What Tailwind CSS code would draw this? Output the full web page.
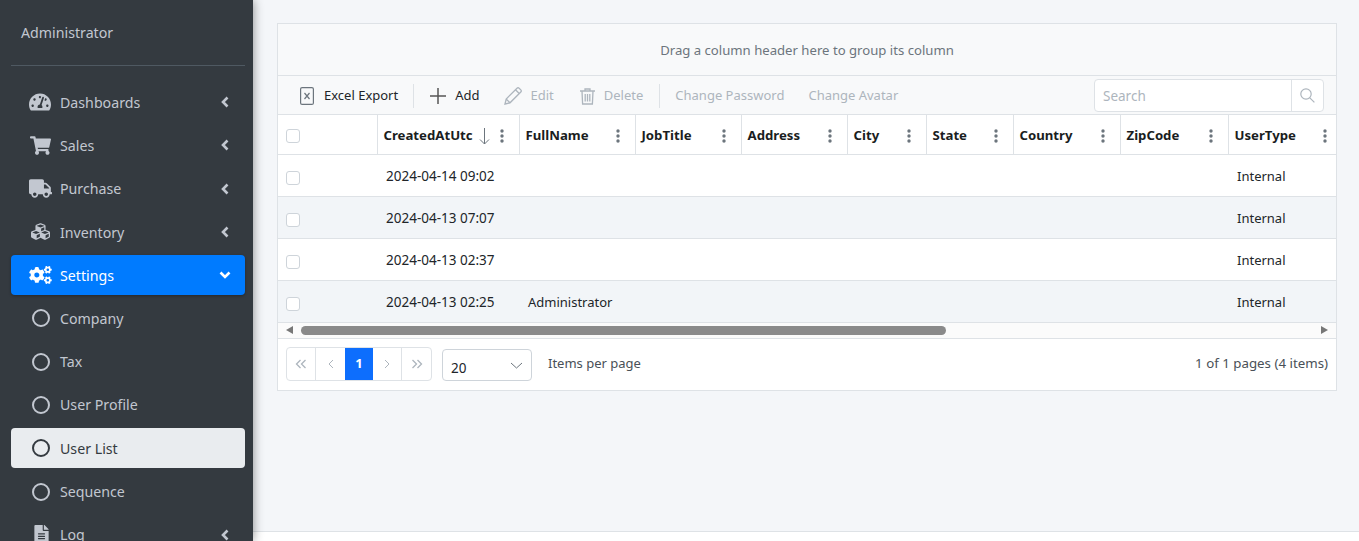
<!DOCTYPE html>
<html lang="en">
<head>
<meta charset="UTF-8">
<title>User List</title>
<script src="https://cdn.jsdelivr.net/npm/@tailwindcss/browser@4"></script>
</head>
<body class="h-[541px] overflow-hidden flex bg-[#f4f6f9] font-['Noto_Sans',sans-serif] text-[13px] text-[#212529]">

<!-- sidebar -->
<aside class="w-[253px] h-[541px] shrink-0 overflow-hidden bg-[#343a40] pl-[11px] pr-[8px] text-[14.2px] text-[#c2c7d0] shadow-[0_0_10px_rgba(0,0,0,0.45)] relative z-10">
  <div class="h-[66px] border-b border-[#4f5962] pl-[10px] pt-[22px] leading-[22px]">Administrator</div>
  <nav class="pt-[16px]">
    <a class="flex items-center h-[40px] mb-[3.3px] pl-[18px] pr-[16px]">
      <svg class="w-[22px] h-[20px] fill-[#c2c7d0]" viewBox="0 0 576 512"><path d="M288 32C128.94 32 0 160.94 0 320c0 52.8 14.25 102.26 39.06 144.8 5.61 9.62 16.3 15.2 27.44 15.2h443c11.14 0 21.83-5.58 27.44-15.2C561.75 422.26 576 372.8 576 320c0-159.06-128.94-288-288-288zm0 64c14.71 0 26.58 10.13 30.32 23.65-1.11 2.26-2.64 4.23-3.45 6.67l-9.22 27.67c-5.13 3.49-10.97 6.01-17.64 6.01-17.67 0-32-14.33-32-32S270.33 96 288 96zM96 384c-17.67 0-32-14.33-32-32s14.33-32 32-32 32 14.33 32 32-14.33 32-32 32zm48-160c-17.67 0-32-14.33-32-32s14.33-32 32-32 32 14.33 32 32-14.33 32-32 32zm246.77-72.41l-61.33 184C343.13 347.33 352 364.54 352 384c0 11.72-3.38 22.55-8.88 32H232.88c-5.5-9.45-8.88-20.28-8.88-32 0-33.94 26.5-61.43 59.9-63.59l61.34-184.01c4.17-12.56 17.73-19.45 30.36-15.17 12.57 4.19 19.35 17.77 15.17 30.36zm14.66 57.2l15.52-46.55c3.47-1.29 7.13-2.23 11.05-2.23 17.67 0 32 14.33 32 32s-14.33 32-32 32c-11.38-.01-20.89-6.28-26.57-15.22zM480 384c-17.67 0-32-14.33-32-32s14.33-32 32-32 32 14.33 32 32-14.33 32-32 32z"/></svg>
      <span class="ml-[9px] pt-[2px] flex-1">Dashboards</span>
      <svg class="w-[8px] h-[12px] stroke-[#c2c7d0] fill-none" stroke-width="2.6" viewBox="0 0 8 12"><path d="M6.5 1.5 2 6l4.5 4.5"/></svg>
    </a>
    <a class="flex items-center h-[40px] mb-[3.3px] pl-[19px] pr-[16px]">
      <svg class="w-[21px] h-[19px] fill-[#c2c7d0]" viewBox="0 0 576 512"><path d="M528.12 301.319l47.273-208C578.806 78.301 567.391 64 551.99 64H159.208l-9.166-44.81C147.758 8.021 137.93 0 126.529 0H24C10.745 0 0 10.745 0 24v16c0 13.255 10.745 24 24 24h69.883l70.248 343.435C147.325 417.1 136 435.222 136 456c0 30.928 25.072 56 56 56s56-25.072 56-56c0-15.674-6.447-29.835-16.824-40h209.647C430.447 426.165 424 440.326 424 456c0 30.928 25.072 56 56 56s56-25.072 56-56c0-22.172-12.888-41.332-31.579-50.405l5.517-24.276c3.413-15.018-8.002-29.319-23.403-29.319H218.117l-6.545-32h293.145c11.206 0 20.92-7.754 23.403-18.681z"/></svg>
      <span class="ml-[9px] flex-1">Sales</span>
      <svg class="w-[8px] h-[12px] stroke-[#c2c7d0] fill-none" stroke-width="2.6" viewBox="0 0 8 12"><path d="M6.5 1.5 2 6l4.5 4.5"/></svg>
    </a>
    <a class="flex items-center h-[40px] mb-[3.3px] pl-[18px] pr-[16px]">
      <svg class="w-[23px] h-[19px] fill-[#c2c7d0]" viewBox="0 0 640 512"><path d="M624 352h-16V243.9c0-12.7-5.1-24.9-14.1-33.9L494 110.1c-9-9-21.2-14.1-33.9-14.1H416V48c0-26.5-21.5-48-48-48H48C21.5 0 0 21.5 0 48v320c0 26.5 21.5 48 48 48h16c0 53 43 96 96 96s96-43 96-96h128c0 53 43 96 96 96s96-43 96-96h48c8.8 0 16-7.2 16-16v-32c0-8.8-7.2-16-16-16zM160 464c-26.5 0-48-21.5-48-48s21.5-48 48-48 48 21.5 48 48-21.5 48-48 48zm320 0c-26.5 0-48-21.5-48-48s21.5-48 48-48 48 21.5 48 48-21.5 48-48 48zm80-208H416V144h44.1l99.9 99.9V256z"/></svg>
      <span class="ml-[8px] flex-1">Purchase</span>
      <svg class="w-[8px] h-[12px] stroke-[#c2c7d0] fill-none" stroke-width="2.6" viewBox="0 0 8 12"><path d="M6.5 1.5 2 6l4.5 4.5"/></svg>
    </a>
    <a class="flex items-center h-[40px] mb-[3.3px] pl-[20px] pr-[16px]">
      <svg class="w-[19px] h-[19px] fill-[#c2c7d0]" viewBox="0 0 512 512"><path d="M488.6 250.2L392 214V105.5c0-15-9.3-28.4-23.4-33.7l-100-37.5c-8.1-3.1-17.1-3.1-25.3 0l-100 37.5c-14.1 5.3-23.4 18.7-23.4 33.7V214l-96.6 36.2C9.3 255.5 0 268.9 0 283.9V394c0 13.6 7.7 26.1 19.9 32.2l100 50c10.1 5.1 22.1 5.1 32.2 0l103.9-52 103.9 52c10.1 5.1 22.1 5.1 32.2 0l100-50c12.2-6.1 19.9-18.6 19.9-32.2V283.9c0-15-9.3-28.4-23.4-33.7zM358 214.8l-85 31.9v-68.2l85-37v73.3zM154 104.1l102-38.2 102 38.2v.6l-102 41.4-102-41.4v-.6zm84 291.1l-85 42.5v-79.1l85-38.8v75.4zm0-112l-102 41.4-102-41.4v-.6l102-38.2 102 38.2v.6zm240 112l-85 42.5v-79.1l85-38.8v75.4zm0-112l-102 41.4-102-41.4v-.6l102-38.2 102 38.2v.6z"/></svg>
      <span class="ml-[10px] pt-[2px] flex-1">Inventory</span>
      <svg class="w-[8px] h-[12px] stroke-[#c2c7d0] fill-none" stroke-width="2.6" viewBox="0 0 8 12"><path d="M6.5 1.5 2 6l4.5 4.5"/></svg>
    </a>
    <a class="flex items-center h-[40px] mb-[3.3px] pl-[18px] pr-[14px] rounded-[4px] bg-[#007bff] text-white shadow-[0_1px_3px_rgba(0,0,0,0.3)]">
      <svg class="w-[23px] h-[18px] fill-white" viewBox="0 0 640 512"><path d="M512.1 191l-8.2 14.3c-3 5.3-9.4 7.5-15.1 5.4-11.8-4.4-22.6-10.7-32.1-18.6-4.6-3.8-5.8-10.5-2.8-15.7l8.2-14.3c-6.9-8-12.3-17.3-15.9-27.4h-16.5c-6 0-11.2-4.3-12.2-10.3-2-12-2.1-24.6 0-37.1 1-6 6.2-10.4 12.2-10.4h16.5c3.6-10.1 9-19.4 15.9-27.4l-8.2-14.3c-3-5.2-1.9-11.9 2.8-15.7 9.5-7.9 20.4-14.2 32.1-18.6 5.7-2.1 12.1.1 15.1 5.4l8.2 14.3c10.5-1.9 21.2-1.9 31.7 0L552 6.3c3-5.3 9.4-7.5 15.1-5.4 11.8 4.4 22.6 10.7 32.1 18.6 4.6 3.8 5.8 10.5 2.8 15.7l-8.2 14.3c6.9 8 12.3 17.3 15.9 27.4h16.5c6 0 11.2 4.3 12.2 10.3 2 12 2.1 24.6 0 37.1-1 6-6.2 10.4-12.2 10.4h-16.5c-3.6 10.1-9 19.4-15.9 27.4l8.2 14.3c3 5.2 1.9 11.9-2.8 15.7-9.5 7.9-20.4 14.2-32.1 18.6-5.7 2.1-12.1-.1-15.1-5.4l-8.2-14.3c-10.4 1.9-21.2 1.9-31.7 0zm-10.5-58.8c38.5 29.6 82.4-14.3 52.8-52.8-38.5-29.7-82.4 14.3-52.8 52.8zM386.3 286.1l33.7 16.8c10.1 5.8 14.5 18.1 10.5 29.1-8.9 24.2-26.4 46.4-42.6 65.8-7.4 8.9-20.2 11.1-30.3 5.3l-29.1-16.8c-16 13.7-34.6 24.6-54.9 31.7v33.6c0 11.6-8.3 21.6-19.7 23.6-24.6 4.2-50.4 4.4-75.9 0-11.5-2-20-11.9-20-23.6V418c-20.3-7.2-38.9-18-54.9-31.7L74 403c-10 5.8-22.9 3.6-30.3-5.3-16.2-19.4-33.3-41.6-42.2-65.7-4-10.9.4-23.2 10.5-29.1l33.3-16.8c-3.9-20.9-3.9-42.4 0-63.4L12 205.8c-10.1-5.8-14.6-18.1-10.5-29 8.9-24.2 26-46.4 42.2-65.8 7.4-8.9 20.2-11.1 30.3-5.3l29.1 16.8c16-13.7 34.6-24.6 54.9-31.7V57.1c0-11.5 8.2-21.5 19.6-23.5 24.6-4.2 50.5-4.4 76-.1 11.5 2 20 11.9 20 23.6v33.6c20.3 7.2 38.9 18 54.9 31.7l29.1-16.8c10-5.8 22.9-3.6 30.3 5.3 16.2 19.4 33.2 41.6 42.1 65.8 4 10.9.1 23.2-10 29.1l-33.7 16.8c3.9 21 3.9 42.5 0 63.5zm-117.6 21.1c59.2-77-28.7-164.9-105.7-105.7-59.2 77 28.7 164.9 105.7 105.7zm243.4 182.7l-8.2 14.3c-3 5.3-9.4 7.5-15.1 5.4-11.8-4.4-22.6-10.7-32.1-18.6-4.6-3.8-5.8-10.5-2.8-15.7l8.2-14.3c-6.9-8-12.3-17.3-15.9-27.4h-16.5c-6 0-11.2-4.3-12.2-10.3-2-12-2.1-24.6 0-37.1 1-6 6.2-10.4 12.2-10.4h16.5c3.6-10.1 9-19.4 15.9-27.4l-8.2-14.3c-3-5.2-1.9-11.9 2.8-15.7 9.5-7.9 20.4-14.2 32.1-18.6 5.7-2.1 12.1.1 15.1 5.4l8.2 14.3c10.5-1.9 21.2-1.9 31.7 0l8.2-14.3c3-5.3 9.4-7.5 15.1-5.4 11.8 4.4 22.6 10.7 32.1 18.6 4.6 3.8 5.8 10.5 2.8 15.7l-8.2 14.3c6.9 8 12.3 17.3 15.9 27.4h16.5c6 0 11.2 4.3 12.2 10.3 2 12 2.1 24.6 0 37.1-1 6-6.2 10.4-12.2 10.4h-16.5c-3.6 10.1-9 19.4-15.9 27.4l8.2 14.3c3 5.2 1.9 11.9-2.8 15.7-9.5 7.9-20.4 14.2-32.1 18.6-5.7 2.1-12.1-.1-15.1-5.4l-8.2-14.3c-10.4 1.9-21.2 1.9-31.7 0zM501.6 431c38.5 29.6 82.4-14.3 52.8-52.8-38.5-29.6-82.4 14.3-52.8 52.8z"/></svg>
      <span class="ml-[8px] flex-1">Settings</span>
      <svg class="w-[12px] h-[8px] stroke-white fill-none" stroke-width="2.6" viewBox="0 0 12 8"><path d="M1.5 1.5 6 6l4.5-4.5"/></svg>
    </a>
    <a class="flex items-center h-[40px] mb-[3.3px] pl-[21px] pr-[14px]">
      <span class="w-[18px] h-[18px] rounded-full border-2 border-[#c2c7d0]"></span>
      <span class="ml-[10px] flex-1">Company</span>
    </a>
    <a class="flex items-center h-[40px] mb-[3.3px] pl-[21px] pr-[14px]">
      <span class="w-[18px] h-[18px] rounded-full border-2 border-[#c2c7d0]"></span>
      <span class="ml-[10px] flex-1">Tax</span>
    </a>
    <a class="flex items-center h-[40px] mb-[3.3px] pl-[21px] pr-[14px]">
      <span class="w-[18px] h-[18px] rounded-full border-2 border-[#c2c7d0]"></span>
      <span class="ml-[10px] flex-1">User Profile</span>
    </a>
    <a class="flex items-center h-[40px] mb-[3.3px] pl-[21px] pr-[14px] rounded-[4px] bg-[#e9ecef] text-[#343a40]">
      <span class="w-[18px] h-[18px] rounded-full border-2 border-[#343a40]"></span>
      <span class="ml-[10px] flex-1">User List</span>
    </a>
    <a class="flex items-center h-[40px] mb-[3.3px] pl-[21px] pr-[14px]">
      <span class="w-[18px] h-[18px] rounded-full border-2 border-[#c2c7d0]"></span>
      <span class="ml-[10px] flex-1">Sequence</span>
    </a>
    <a class="flex items-center h-[40px] pl-[23px] pr-[16px]">
      <svg class="w-[15px] h-[19px] fill-[#c2c7d0]" viewBox="0 0 384 512"><path d="M224 136V0H24C10.7 0 0 10.7 0 24v464c0 13.3 10.7 24 24 24h336c13.3 0 24-10.7 24-24V160H248c-13.2 0-24-10.8-24-24zm64 236c0 6.6-5.4 12-12 12H108c-6.6 0-12-5.4-12-12v-8c0-6.6 5.4-12 12-12h168c6.6 0 12 5.4 12 12v8zm0-64c0 6.6-5.4 12-12 12H108c-6.6 0-12-5.4-12-12v-8c0-6.6 5.4-12 12-12h168c6.6 0 12 5.4 12 12v8zm0-72v8c0 6.6-5.4 12-12 12H108c-6.6 0-12-5.4-12-12v-8c0-6.6 5.4-12 12-12h168c6.6 0 12 5.4 12 12zm96-114.1v6.1H256V0h6.1c6.4 0 12.5 2.5 17 7l97.9 98c4.5 4.5 7 10.6 7 16.9z"/></svg>
      <span class="ml-[11px] flex-1">Log</span>
      <svg class="w-[8px] h-[12px] stroke-[#c2c7d0] fill-none" stroke-width="2.6" viewBox="0 0 8 12"><path d="M6.5 1.5 2 6l4.5 4.5"/></svg>
    </a>
  </nav>
</aside>

<!-- content -->
<main class="flex-1 flex flex-col h-[541px]">
  <div class="flex-1 pt-[23px] pl-[24px] pr-[22px]">
    <div class="border border-[#dee2e6] bg-white">
      <div class="h-[52px] flex items-center justify-center pt-[2px] bg-[#f8f9fa] border-b border-[#dee2e6] text-[13.15px] text-[#6c757d]">Drag a column header here to group its column</div>

      <!-- toolbar -->
      <div class="h-[39px] flex items-center bg-[#f8f9fa] border-b border-[#dee2e6] pt-[2px] pl-[22px] pr-[12px] whitespace-nowrap">
        <svg class="w-[14px] h-[18px] fill-none stroke-[#6c757d]" stroke-width="1.2" viewBox="0 0 14 18"><rect x="0.6" y="0.6" width="12.8" height="16.8" rx="1.5"/><path d="M4.5 6 9.5 12M9.5 6 4.5 12"/></svg>
        <span class="ml-[10px]">Excel Export</span>
        <span class="ml-[15px] w-px h-[24px] bg-[#dee2e6]"></span>
        <svg class="ml-[16px] w-[16px] h-[16px] stroke-[#555] fill-none" stroke-width="1.5" viewBox="0 0 16 16"><path d="M8 0v16M0 8h16"/></svg>
        <span class="ml-[9px]">Add</span>
        <svg class="ml-[24px] w-[18px] h-[18px] stroke-[#adb5bd] fill-none" stroke-width="1.3" viewBox="0 0 18 18"><path d="M1 17l1.2-5L13 1.2a1.5 1.5 0 0 1 2.1 0l1.7 1.7a1.5 1.5 0 0 1 0 2.1L6 15.8zM2.2 12 6 15.8M11.5 2.8l3.7 3.7"/></svg>
        <span class="ml-[9px] text-[#adb5bd]">Edit</span>
        <svg class="ml-[26px] w-[15px] h-[17px] stroke-[#adb5bd] fill-none" stroke-width="1.3" viewBox="0 0 15 17"><path d="M0 3h15M5 3V1h5v2M2 3l.6 13h9.8L13 3M5.2 6v7.5M7.5 6v7.5M9.8 6v7.5"/></svg>
        <span class="ml-[9px] text-[#adb5bd]">Delete</span>
        <span class="ml-[16px] w-px h-[24px] bg-[#dee2e6]"></span>
        <span class="ml-[15px] text-[#adb5bd]">Change Password</span>
        <span class="ml-[24px] text-[#adb5bd]">Change Avatar</span>
        <div class="ml-auto -mt-[2px] flex w-[230px] h-[33px] border border-[#dee2e6] rounded-[4px] bg-white">
          <span class="flex-1 pl-[8px] leading-[32px] text-[13.5px] text-[#adb5bd]">Search</span>
          <span class="w-[32px] flex items-center justify-center border-l border-[#dee2e6]">
            <svg class="w-[15px] h-[15px] stroke-[#adb5bd] fill-none" stroke-width="1.2" viewBox="0 0 15 15"><circle cx="6" cy="6" r="5.2"/><path d="m9.8 9.8 4.6 4.6"/></svg>
          </span>
        </div>
      </div>

      <!-- grid -->
      <table class="w-full table-fixed border-collapse">
        <colgroup>
          <col class="w-[99px]"><col class="w-[142px]"><col class="w-[116px]"><col class="w-[106px]"><col class="w-[106px]"><col class="w-[79px]"><col class="w-[87px]"><col class="w-[107px]"><col class="w-[108px]"><col>
        </colgroup>
        <thead>
          <tr class="h-[39px] border-b border-[#dee2e6] font-bold text-[13.2px] text-[#1a1d21]">
            <th class="pl-[8px] pt-[4px] text-left"><span class="block w-[14px] h-[14px] rounded-[3px] border border-[#ced4da] bg-white"></span></th>
            <th class="border-l border-[#dee2e6] pl-[6px] pt-[4px] text-left">
              <div class="flex items-center">CreatedAtUtc
                <svg class="ml-[6px] w-[11px] h-[17px] stroke-[#6c757d] fill-none" viewBox="0 0 11 17"><path d="M5.5 0v16M1 11.5 5.5 16 10 11.5"/></svg>
                <svg class="ml-[10px] w-[4px] h-[14px] fill-[#6c757d]" viewBox="0 0 4 14"><circle cx="2" cy="2" r="1.7"/><circle cx="2" cy="7" r="1.7"/><circle cx="2" cy="12" r="1.7"/></svg>
              </div>
            </th>
            <th class="border-l border-[#dee2e6] pl-[6px] pt-[4px] text-left"><div class="flex items-center justify-between pr-[15px]">FullName<svg class="w-[4px] h-[14px] fill-[#6c757d]" viewBox="0 0 4 14"><circle cx="2" cy="2" r="1.7"/><circle cx="2" cy="7" r="1.7"/><circle cx="2" cy="12" r="1.7"/></svg></div></th>
            <th class="border-l border-[#dee2e6] pl-[6px] pt-[4px] text-left"><div class="flex items-center justify-between pr-[15px]">JobTitle<svg class="w-[4px] h-[14px] fill-[#6c757d]" viewBox="0 0 4 14"><circle cx="2" cy="2" r="1.7"/><circle cx="2" cy="7" r="1.7"/><circle cx="2" cy="12" r="1.7"/></svg></div></th>
            <th class="border-l border-[#dee2e6] pl-[6px] pt-[4px] text-left"><div class="flex items-center justify-between pr-[15px]">Address<svg class="w-[4px] h-[14px] fill-[#6c757d]" viewBox="0 0 4 14"><circle cx="2" cy="2" r="1.7"/><circle cx="2" cy="7" r="1.7"/><circle cx="2" cy="12" r="1.7"/></svg></div></th>
            <th class="border-l border-[#dee2e6] pl-[6px] pt-[4px] text-left"><div class="flex items-center justify-between pr-[15px]">City<svg class="w-[4px] h-[14px] fill-[#6c757d]" viewBox="0 0 4 14"><circle cx="2" cy="2" r="1.7"/><circle cx="2" cy="7" r="1.7"/><circle cx="2" cy="12" r="1.7"/></svg></div></th>
            <th class="border-l border-[#dee2e6] pl-[6px] pt-[4px] text-left"><div class="flex items-center justify-between pr-[15px]">State<svg class="w-[4px] h-[14px] fill-[#6c757d]" viewBox="0 0 4 14"><circle cx="2" cy="2" r="1.7"/><circle cx="2" cy="7" r="1.7"/><circle cx="2" cy="12" r="1.7"/></svg></div></th>
            <th class="border-l border-[#dee2e6] pl-[6px] pt-[4px] text-left"><div class="flex items-center justify-between pr-[15px]">Country<svg class="w-[4px] h-[14px] fill-[#6c757d]" viewBox="0 0 4 14"><circle cx="2" cy="2" r="1.7"/><circle cx="2" cy="7" r="1.7"/><circle cx="2" cy="12" r="1.7"/></svg></div></th>
            <th class="border-l border-[#dee2e6] pl-[6px] pt-[4px] text-left"><div class="flex items-center justify-between pr-[15px]">ZipCode<svg class="w-[4px] h-[14px] fill-[#6c757d]" viewBox="0 0 4 14"><circle cx="2" cy="2" r="1.7"/><circle cx="2" cy="7" r="1.7"/><circle cx="2" cy="12" r="1.7"/></svg></div></th>
            <th class="border-l border-[#dee2e6] pl-[6px] pt-[4px] text-left"><div class="flex items-center justify-between pr-[9px]">UserType<svg class="w-[4px] h-[14px] fill-[#6c757d]" viewBox="0 0 4 14"><circle cx="2" cy="2" r="1.7"/><circle cx="2" cy="7" r="1.7"/><circle cx="2" cy="12" r="1.7"/></svg></div></th>
          </tr>
        </thead>
        <tbody>
          <tr class="h-[42px] border-b border-[#dee2e6]">
            <td class="pl-[8px]"><span class="block w-[14px] h-[14px] mt-[6px] rounded-[3px] border border-[#ced4da] bg-white"></span></td>
            <td class="pl-[9px] pt-[3px] text-[13.5px]">2024-04-14 09:02</td><td class="pl-[9px] pt-[4px]"></td><td></td><td></td><td></td><td></td><td></td><td></td><td class="pl-[9px] pt-[4px]">Internal</td>
          </tr>
          <tr class="h-[42px] border-b border-[#dee2e6] bg-[#f2f5f8]">
            <td class="pl-[8px]"><span class="block w-[14px] h-[14px] mt-[6px] rounded-[3px] border border-[#ced4da] bg-white"></span></td>
            <td class="pl-[9px] pt-[3px] text-[13.5px]">2024-04-13 07:07</td><td class="pl-[9px] pt-[4px]"></td><td></td><td></td><td></td><td></td><td></td><td></td><td class="pl-[9px] pt-[4px]">Internal</td>
          </tr>
          <tr class="h-[42px] border-b border-[#dee2e6]">
            <td class="pl-[8px]"><span class="block w-[14px] h-[14px] mt-[6px] rounded-[3px] border border-[#ced4da] bg-white"></span></td>
            <td class="pl-[9px] pt-[3px] text-[13.5px]">2024-04-13 02:37</td><td class="pl-[9px] pt-[4px]"></td><td></td><td></td><td></td><td></td><td></td><td></td><td class="pl-[9px] pt-[4px]">Internal</td>
          </tr>
          <tr class="h-[42px] border-b border-[#dee2e6] bg-[#f2f5f8]">
            <td class="pl-[8px]"><span class="block w-[14px] h-[14px] mt-[6px] rounded-[3px] border border-[#ced4da] bg-white"></span></td>
            <td class="pl-[9px] pt-[3px] text-[13.5px]">2024-04-13 02:25</td><td class="pl-[9px] pt-[4px]">Administrator</td><td></td><td></td><td></td><td></td><td></td><td></td><td class="pl-[9px] pt-[4px]">Internal</td>
          </tr>
        </tbody>
      </table>

      <!-- scrollbar -->
      <div class="h-[16px] flex items-center bg-[#fbfbfb] border-b border-[#dee2e6] pl-[8px] pr-[8px]">
        <span class="w-0 h-0 border-y-[4px] border-y-transparent border-r-[7px] border-r-[#777]"></span>
        <span class="ml-[8px] w-[645px] h-[9px] rounded-full bg-[#8a8a8a]"></span>
        <span class="ml-auto w-0 h-0 border-y-[4px] border-y-transparent border-l-[7px] border-l-[#777]"></span>
      </div>

      <!-- pager -->
      <div class="h-[51px] flex items-center pl-[8px] pr-[8px]">
        <div class="flex w-[146px] h-[34px] border border-[#dee2e6] rounded-[4px] text-[#adb5bd]">
          <span class="w-[29px] flex items-center justify-center border-r border-[#dee2e6]"><svg class="w-[12px] h-[10px] stroke-[#adb5bd] fill-none" stroke-width="1.3" viewBox="0 0 12 10"><path d="M5.5 1 1.5 5l4 4M10.5 1l-4 4 4 4"/></svg></span>
          <span class="w-[29px] flex items-center justify-center"><svg class="w-[6px] h-[10px] stroke-[#adb5bd] fill-none" viewBox="0 0 6 10"><path d="M5 1 1 5l4 4"/></svg></span>
          <span class="w-[28px] flex items-center justify-center bg-[#0d6efd] text-white font-bold">1</span>
          <span class="w-[29px] flex items-center justify-center border-r border-[#dee2e6]"><svg class="w-[6px] h-[10px] stroke-[#adb5bd] fill-none" viewBox="0 0 6 10"><path d="m1 1 4 4-4 4"/></svg></span>
          <span class="flex-1 flex items-center justify-center"><svg class="w-[12px] h-[10px] stroke-[#adb5bd] fill-none" stroke-width="1.3" viewBox="0 0 12 10"><path d="m1.5 1 4 4-4 4M6.5 1l4 4-4 4"/></svg></span>
        </div>
        <div class="ml-[10px] mt-[2px] flex items-center w-[90px] h-[32px] border border-[#ced4da] rounded-[4px] pl-[8px] pr-[8px] bg-white">
          <span class="flex-1 pt-[6px] text-[13.5px]">20</span>
          <svg class="w-[13px] h-[7px] stroke-[#6c757d] fill-none" viewBox="0 0 13 7"><path d="m1 1 5.5 5L12 1"/></svg>
        </div>
        <span class="ml-[16px] text-[#495057]">Items per page</span>
        <span class="ml-auto text-[13.3px] text-[#495057]">1 of 1 pages (4 items)</span>
      </div>
    </div>
  </div>
  <footer class="h-[10px] bg-white border-t border-[#dee2e6]"></footer>
</main>

</body>
</html>
